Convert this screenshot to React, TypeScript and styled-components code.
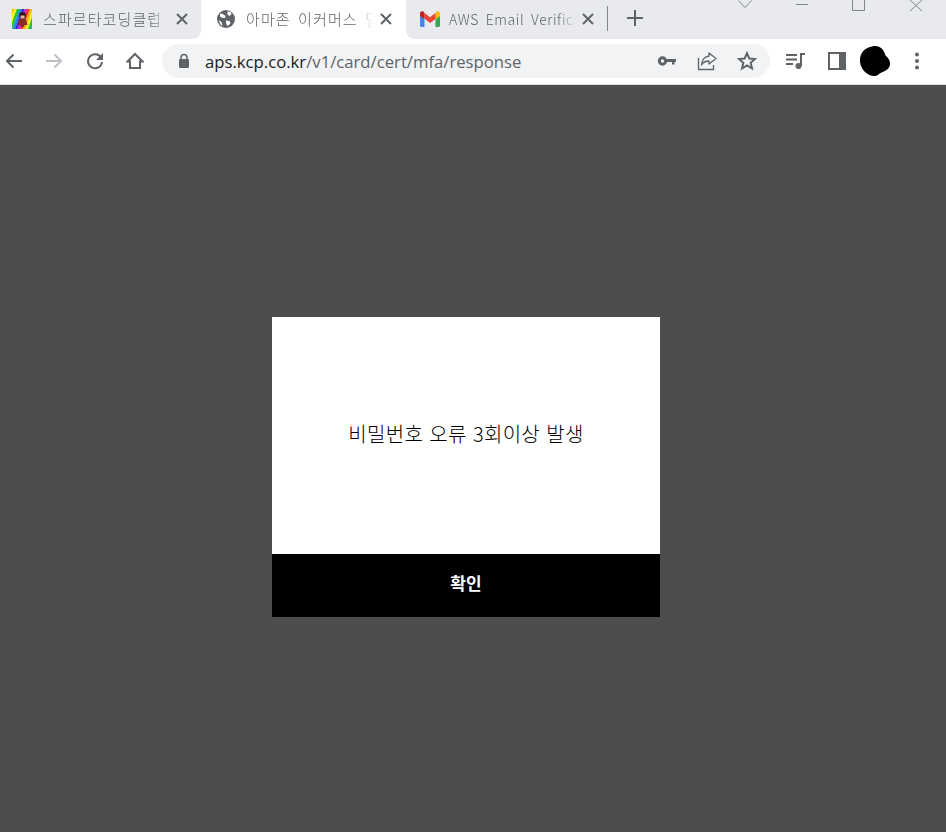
import React from "react";
import styled, { createGlobalStyle } from "styled-components";

const GlobalStyle = createGlobalStyle`
  html, body {
    margin: 0;
    padding: 0;
    background: #4d4d4d;
  }
  body {
    font-family: "Noto Sans CJK KR", "Noto Sans", sans-serif;
  }
  * {
    box-sizing: border-box;
  }
`;

const Page = styled.div`
  width: 946px;
  height: 832px;
  display: flex;
  flex-direction: column;
  overflow: hidden;
  background: #4d4d4d;
`;

const TabStrip = styled.div`
  height: 39px;
  flex: none;
  display: flex;
  align-items: stretch;
  background: #e8eaed;
`;

const Tab = styled.div<{ $active?: boolean; $width: number; $inset: number; $gap: number }>`
  position: relative;
  width: ${(p) => p.$width}px;
  flex: none;
  display: flex;
  align-items: center;
  gap: ${(p) => p.$gap}px;
  padding: 0 ${(p) => (p.$active ? 13 : 12)}px 2px ${(p) => p.$inset}px;
  background: ${(p) => (p.$active ? "#fff" : "transparent")};
  color: #5f6368;

  ${(p) =>
    p.$active &&
    `
    &::before, &::after {
      content: "";
      position: absolute;
      bottom: 0;
      width: 8px;
      height: 8px;
    }
    &::before {
      left: -8px;
      background: radial-gradient(circle at 0 0, #e8eaed 7.5px, #fff 8px);
    }
    &::after {
      right: -8px;
      background: radial-gradient(circle at 100% 0, #e8eaed 7.5px, #fff 8px);
    }
  `}
`;

const Favicon = styled.span`
  width: 20px;
  height: 20px;
  flex: none;
  display: flex;
  align-items: center;
  justify-content: center;
`;

const TabTitle = styled.span<{ $hangul?: boolean }>`
  flex: 1;
  min-width: 0;
  margin-right: -4px;
  overflow: hidden;
  white-space: nowrap;
  font-size: ${(p) => (p.$hangul ? 15 : 14)}px;
  font-weight: 300;
  letter-spacing: ${(p) => (p.$hangul ? 1.1 : 0.6)}px;
  word-spacing: 3px;
  mask-image: linear-gradient(to right, #000 86%, transparent 100%);
`;

const TabClose = styled.span`
  width: 14px;
  height: 14px;
  flex: none;
  display: flex;
`;

const Separator = styled.div`
  width: 1px;
  height: 25px;
  margin: 6px 0 0 0;
  background: #80868b;
`;

const NewTab = styled.div`
  width: 16px;
  height: 16px;
  margin: 10px 0 0 19px;
  display: flex;
`;

const WindowControls = styled.div`
  margin: 0 2px 0 auto;
  height: 12px;
  display: grid;
  grid-template-columns: repeat(4, 57px);
  align-items: start;
  justify-items: center;
`;

const WindowIcon = styled.svg`
  display: block;
`;

const Toolbar = styled.div`
  height: 46px;
  flex: none;
  display: flex;
  align-items: center;
  padding-bottom: 1px;
  background: #fff;
  border-bottom: 1px solid #dadce0;
`;

const NavGroup = styled.div`
  display: flex;
  gap: 12.33px;
  margin-right: 13px;
`;

const NavButton = styled.span`
  width: 28px;
  height: 28px;
  display: flex;
  align-items: center;
  justify-content: center;
`;

const Omnibox = styled.div`
  width: 608px;
  height: 34px;
  flex: none;
  display: flex;
  align-items: center;
  padding: 0 13px 0 14px;
  border-radius: 17px;
  background: #f1f3f4;
`;

const Url = styled.span`
  margin-left: 13px;
  flex: 1;
  font-family: "Open Sans", "Noto Sans", sans-serif;
  font-size: 16.7px;
  color: #5f6368;
  white-space: nowrap;
  b {
    font-weight: 400;
    color: #202124;
  }
`;

const OmniActions = styled.div`
  display: flex;
  gap: 20px;
`;

const OmniIcon = styled.span`
  width: 20px;
  height: 20px;
  display: flex;
`;

const ToolActions = styled.div`
  display: flex;
  align-items: center;
  margin-left: 6px;
`;

const ToolIcon = styled.span<{ $width: number }>`
  width: ${(p) => p.$width}px;
  height: 28px;
  display: flex;
  align-items: center;
  justify-content: center;
`;

const Content = styled.main`
  flex: 1;
  padding: 232px 0 0 272px;
  background: #4d4d4d;
`;

const Dialog = styled.div`
  width: 388px;
  height: 300px;
  display: flex;
  flex-direction: column;
  background: #fff;
`;

const Message = styled.div`
  flex: 1;
  display: flex;
  align-items: center;
  justify-content: center;
  padding-bottom: 5px;
  font-size: 20px;
  font-weight: 300;
  letter-spacing: 0.3px;
  word-spacing: 1.5px;
  color: #000;
`;

const ConfirmButton = styled.button`
  height: 63px;
  flex: none;
  padding: 0 0 7px;
  border: 0;
  background: #000;
  color: #fff;
  font-family: inherit;
  font-size: 17px;
  font-weight: 700;
`;

const stripes = ["#ff2a2a", "#ffb400", "#f5ee20", "#22c82a", "#1f8cf0", "#3a2ae0", "#c62ad8"];

const Close = () => (
  <svg width="14" height="14" viewBox="0 0 14 14">
    <path d="M2 2l10 10M12 2L2 12" stroke="#5f6368" strokeWidth="2" />
  </svg>
);

const RainbowIcon = () => (
  <svg width="20" height="20" viewBox="0 0 20 20">
    <clipPath id="favicon-clip">
      <rect width="20" height="20" />
    </clipPath>
    <g clipPath="url(#favicon-clip)">
      {Array.from({ length: 14 }, (_, i) => (
        <path
          key={i}
          d={`M${i * 2.6 - 10} 20L${i * 2.6 - 3} 0h2.700L${i * 2.6 - 7.3} 20z`}
          fill={stripes[i % stripes.length]}
        />
      ))}
    </g>
    <circle cx="10.500" cy="6.500" r="3.400" fill="#33171a" />
    <rect x="8.500" y="6.500" width="4" height="3" fill="#e8b890" />
    <path d="M7 10h7l1.500 6h-3l-.5 2h-3l-.5-2h-3z" fill="#8e2a2a" />
  </svg>
);

const GlobeIcon = () => (
  <svg width="18" height="18" viewBox="0 0 18 18">
    <circle cx="9" cy="9" r="9" fill="#5f6368" />
    <path
      d="M3 3.500L6 4l2.500 2L8 8H5.500L3 6.500zM10.500 1.500l3 .5 1 2-2 2-2-1.500zM9 10.500l3.500.5 1 2-2 2.500H10l-1-2.500zM1.500 10l3 2 1 4-2-1.500z"
      fill="#fff"
    />
  </svg>
);

const GmailIcon = () => (
  <svg width="20" height="16" viewBox="0 0 20 16">
    <path d="M0 4v10.500C0 15.300.7 16 1.500 16H4.500V7.500z" fill="#4285f4" />
    <path d="M20 4v10.500c0 .8-.7 1.500-1.500 1.500h-3V7.500z" fill="#34a853" />
    <path d="M15.500 2v6.500L20 5V2.300C20 .5 17.900-.5 16.500.6z" fill="#fbbc04" />
    <path d="M4.500 7.500V2L10 6.200 15.500 2v6L10 12z" fill="#ea4335" />
    <path d="M0 2.300V5l4.500 3V2L3.500.6C2.100-.5 0 .5 0 2.300z" fill="#c5221f" />
  </svg>
);

const BackIcon = () => (
  <svg width="18" height="18" viewBox="0 0 18 18">
    <path d="M17 9H2.500M8.500 2.500L2 9l6.500 6.500" fill="none" stroke="#5f6368" strokeWidth="2" />
  </svg>
);

const ForwardIcon = () => (
  <svg width="18" height="18" viewBox="0 0 18 18">
    <path d="M1 9h14.500M9.500 2.500L16 9l-6.500 6.500" fill="none" stroke="#bdc1c6" strokeWidth="2" />
  </svg>
);

const ReloadIcon = () => (
  <svg width="18" height="18" viewBox="0 0 18 18">
    <path d="M15 5.500A7 7 0 1 0 16 10" fill="none" stroke="#5f6368" strokeWidth="2" />
    <path d="M17 1v7h-7z" fill="#5f6368" />
  </svg>
);

const HomeIcon = () => (
  <svg width="18" height="18" viewBox="0 0 18 18">
    <path d="M9 2L1.500 9.500H4V16h10V9.500h2.500z" fill="none" stroke="#5f6368" strokeWidth="2" strokeLinejoin="miter" />
  </svg>
);

const LockIcon = () => (
  <svg width="16" height="16" viewBox="0 0 16 16">
    <path d="M5 7V4.500a3 3 0 0 1 6 0V7" fill="none" stroke="#5f6368" strokeWidth="1.600" />
    <rect x="3" y="6" width="10" height="9" rx="1.200" fill="#5f6368" />
  </svg>
);

const KeyIcon = () => (
  <svg width="20" height="20" viewBox="0 0 20 20">
    <circle cx="5.500" cy="10" r="3.200" fill="none" stroke="#5f6368" strokeWidth="3" />
    <path d="M9 8h10v3h-1.500v2.500h-2.500V11H9z" fill="#5f6368" />
  </svg>
);

const ShareIcon = () => (
  <svg width="20" height="20" viewBox="0 0 20 20">
    <path d="M1.500 7v11.500h15V14" fill="none" stroke="#5f6368" strokeWidth="1.300" />
    <path d="M12 2l7 5.500-7 5.500V10C8.500 10 6 11 4.500 14 4.800 9.500 7.500 5.500 12 5z" fill="none" stroke="#5f6368" strokeWidth="1.300" strokeLinejoin="round" />
  </svg>
);

const StarIcon = () => (
  <svg width="20" height="20" viewBox="0 0 20 20">
    <path d="M10 2.200l2.300 5.300 5.700.5-4.300 3.800 1.300 5.700L10 14.500l-5 3 1.300-5.700L2 8l5.700-.5z" fill="none" stroke="#5f6368" strokeWidth="2" />
  </svg>
);

const MediaIcon = () => (
  <svg width="20" height="18" viewBox="0 0 20 18">
    <path d="M0 3h11M0 7.500h11M0 12h7" stroke="#5f6368" strokeWidth="2" />
    <path d="M15 14V2h4" fill="none" stroke="#5f6368" strokeWidth="2" />
    <circle cx="12.500" cy="14" r="3" fill="#5f6368" />
  </svg>
);

const PanelIcon = () => (
  <svg width="18" height="18" viewBox="0 0 18 18">
    <rect x="1" y="1" width="16" height="16" fill="none" stroke="#5f6368" strokeWidth="2" />
    <rect x="11" y="1" width="6" height="16" fill="#5f6368" />
  </svg>
);

const AvatarBlob = () => (
  <svg width="32" height="32" viewBox="0 0 32 32">
    <path
      d="M13 1.500c4-1.200 8.500 0 11 3.500 1.500 2 2 4 2.500 5.500 2 1.500 4 4 4.500 7 .5 4-2 7-5 8.500-2.500 1-4.500 1.500-6.500 3.500-2.500 2-6 2-9 .5C7 28.500 3.500 25 1.800 20.500.2 16 .8 11 3 7.500 5.500 4 9 2.500 13 1.500z"
      fill="#000"
    />
  </svg>
);

const DotsIcon = () => (
  <svg width="6" height="18" viewBox="0 0 6 18">
    <circle cx="3" cy="2.500" r="2" fill="#5f6368" />
    <circle cx="3" cy="9" r="2" fill="#5f6368" />
    <circle cx="3" cy="15.500" r="2" fill="#5f6368" />
  </svg>
);

export default function App() {
  return (
    <Page>
      <GlobalStyle />
      <TabStrip>
        <Tab $width={201} $inset={12} $gap={11}>
          <Favicon><RainbowIcon /></Favicon>
          <TabTitle $hangul>스파르타코딩클럽</TabTitle>
          <TabClose><Close /></TabClose>
        </Tab>
        <Tab $width={205} $inset={15} $gap={10} $active>
          <Favicon><GlobeIcon /></Favicon>
          <TabTitle $hangul>아마존 이커머스 덜</TabTitle>
          <TabClose><Close /></TabClose>
        </Tab>
        <Tab $width={201} $inset={14} $gap={9}>
          <Favicon><GmailIcon /></Favicon>
          <TabTitle>AWS Email Verifica</TabTitle>
          <TabClose><Close /></TabClose>
        </Tab>
        <Separator />
        <NewTab>
          <svg width="16" height="16" viewBox="0 0 16 16">
            <path d="M8 0v16M0 8h16" stroke="#5f6368" strokeWidth="2" />
          </svg>
        </NewTab>
        <WindowControls>
          <WindowIcon width="14" height="9" viewBox="0 0 14 9">
            <path d="M.5.500L7 7.500 13.500.500" fill="none" stroke="#80868b" />
          </WindowIcon>
          <WindowIcon width="14" height="9" viewBox="0 0 14 9">
            <path d="M1 4.500h12" stroke="#80868b" />
          </WindowIcon>
          <WindowIcon width="13" height="11" viewBox="0 0 13 11">
            <path d="M.5 0v10.500h12V0" fill="none" stroke="#80868b" />
          </WindowIcon>
          <WindowIcon width="14" height="11" viewBox="0 0 14 11">
            <path d="M1 0l12 11M13 0L1 11" stroke="#80868b" />
          </WindowIcon>
        </WindowControls>
      </TabStrip>
      <Toolbar>
        <NavGroup>
          <NavButton><BackIcon /></NavButton>
          <NavButton><ForwardIcon /></NavButton>
          <NavButton><ReloadIcon /></NavButton>
          <NavButton><HomeIcon /></NavButton>
        </NavGroup>
        <Omnibox>
          <LockIcon />
          <Url><b>aps.kcp.co.kr</b>/v1/card/cert/mfa/response</Url>
          <OmniActions>
            <OmniIcon><KeyIcon /></OmniIcon>
            <OmniIcon><ShareIcon /></OmniIcon>
            <OmniIcon><StarIcon /></OmniIcon>
          </OmniActions>
        </Omnibox>
        <ToolActions>
          <ToolIcon $width={41}><MediaIcon /></ToolIcon>
          <ToolIcon $width={41}><PanelIcon /></ToolIcon>
          <ToolIcon $width={34}><AvatarBlob /></ToolIcon>
          <ToolIcon $width={50}><DotsIcon /></ToolIcon>
        </ToolActions>
      </Toolbar>
      <Content>
        <Dialog>
          <Message>비밀번호 오류 3회이상 발생</Message>
          <ConfirmButton>확인</ConfirmButton>
        </Dialog>
      </Content>
    </Page>
  );
}
